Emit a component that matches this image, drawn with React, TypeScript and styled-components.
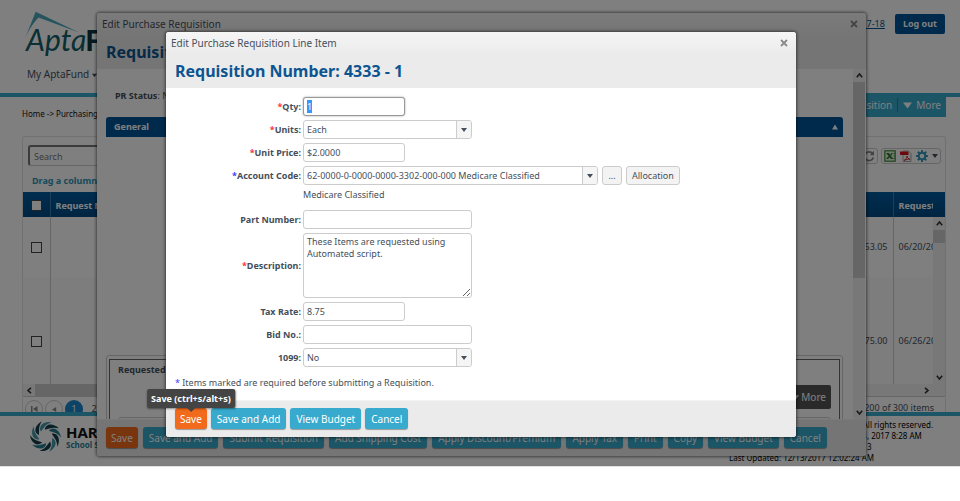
import React, { useEffect, useRef } from 'react';
import styled, { createGlobalStyle } from 'styled-components';

const teal = '#38aacd';
const navy = '#005596';
const ink = '#454f5b';

const Global = createGlobalStyle`
  * { box-sizing: border-box; }
  body { margin: 0; background: #fff; }
  body, button, input, select, textarea {
    font-family: "Noto Sans", "Open Sans", sans-serif;
    font-size: 9px;
    line-height: 12px;
    color: ${ink};
  }
  button { cursor: pointer; }
`;

/* ---------- application page ---------- */

const Shell = styled.div`
  position: relative;
  overflow: hidden;
  border-bottom: 1px solid #e2e2e2;
`;

const Masthead = styled.header`
  display: flex;
  justify-content: space-between;
  align-items: flex-start;
  height: 93px;
  padding: 11px 15px 0 24px;
`;

const Brand = styled.div`
  display: flex;
  flex-direction: column;
`;

const BrandLogo = styled.svg`
  width: 150px;
  height: 50px;
`;

const Menu = styled.nav`
  display: flex;
  gap: 16px;
  padding: 6px 3px;
`;

const MenuLink = styled.a`
  font-size: 10px;
  line-height: 14px;
  color: ${ink};
  text-decoration: none;
`;

const Account = styled.div`
  display: flex;
  align-items: center;
  gap: 10px;
  padding-top: 3px;
`;

const YearLink = styled.a`
  color: ${navy};
`;

const LogoutButton = styled.button`
  height: 20px;
  padding: 0 8px;
  border: 0;
  border-radius: 2px;
  background: ${navy};
  color: #fff;
  font-weight: bold;
`;

const SubBar = styled.div`
  display: flex;
  justify-content: space-between;
  align-items: flex-start;
  height: 43px;
  padding: 0 14px 0 22px;
  border-top: 4px solid ${teal};
`;

const Breadcrumb = styled.div`
  padding-top: 11px;
  font-size: 8px;
  color: #111;
`;

const ActionTabs = styled.div`
  display: flex;
  background: ${teal};
  padding: 1px 0 5px;
`;

const ActionTab = styled.button`
  display: flex;
  align-items: center;
  gap: 4px;
  height: 14px;
  padding: 0 5px;
  border: 0;
  background: none;
  color: #fff;
  font-size: 10px;
  & + & { border-left: 1px solid #2a7f9c; }
`;

const GridPanel = styled.section`
  margin: 0 14px 0 22px;
  border: 1px solid #e2e2e2;
  border-bottom: 0;
  border-radius: 3px 3px 0 0;
`;

const GridTools = styled.div`
  display: flex;
  justify-content: space-between;
  align-items: center;
  padding: 8px 4px 0 5px;
`;

const SearchInput = styled.input`
  width: 180px;
  height: 21px;
  padding: 0 4px;
  border: 1px solid #ccc;
  border-top: 2px solid #777;
  border-left: 2px solid #777;
  border-radius: 3px;
  &::placeholder { color: #777; opacity: 1; }
`;

const ToolGroups = styled.div`
  display: flex;
  gap: 3px;
`;

const ToolGroup = styled.div`
  display: flex;
  align-items: center;
  gap: 4px;
  height: 16px;
  padding: 0 2px;
  border: 1px solid #ccc;
  border-radius: 3px;
`;

const ToolButton = styled.button`
  display: flex;
  padding: 0;
  border: 0;
  background: none;
`;

const GroupHint = styled.div`
  padding: 9px 9px 5px;
  color: #2e95b5;
  font-weight: bold;
`;

const GridViewport = styled.div`
  display: flex;
  height: 192px;
  overflow: hidden;
  background: linear-gradient(#005b9e, #004a84) top / 100% 25px no-repeat;
`;

const RequestTable = styled.table`
  flex: 1;
  width: 100%;
  height: 213px;
  table-layout: fixed;
  border-collapse: collapse;
`;

const HeadCell = styled.th<{ $w?: number }>`
  width: ${p => (p.$w ? p.$w + 'px' : 'auto')};
  height: 25px;
  padding: 2px 5px 0;
  overflow: hidden;
  border-right: 1px solid #3c7cae;
  color: #fff;
  text-align: left;
  white-space: nowrap;
  &:last-child { border-right: 0; padding-right: 0; }
`;

const Cell = styled.td<{ $h: number; $right?: boolean; $alt?: boolean }>`
  height: ${p => p.$h}px;
  padding: 0 5px;
  overflow: hidden;
  background: ${p => (p.$alt ? '#fafafa' : '#fff')};
  border-right: 1px solid #ccc;
  text-align: ${p => (p.$right ? 'right' : 'left')};
  white-space: nowrap;
  &:last-child { border-right: 0; padding-right: 0; }
`;

const Check = styled.input`
  appearance: none;
  display: block;
  width: 11px;
  height: 11px;
  margin: 0 auto;
  border: 1px solid #444;
  background: #fff;
`;

const ScrollTrack = styled.div<{ $top?: number }>`
  display: flex;
  flex: none;
  flex-direction: column;
  width: 12px;
  margin-top: ${p => p.$top || 0}px;
  background: #f0f0f0;
`;

const ScrollThumb = styled.div<{ $h: number }>`
  height: ${p => p.$h}px;
  background: #cdcdcd;
`;

const ScrollArrow = styled.button<{ $end?: boolean }>`
  display: flex;
  align-items: center;
  justify-content: center;
  width: 12px;
  height: 13px;
  padding: 0;
  border: 0;
  background: none;
  margin-top: ${p => (p.$end ? 'auto' : '0')};
`;

const HorizontalScroll = styled.div`
  display: flex;
  height: 12px;
  background: #f0f0f0;
  padding-right: 13px;
`;

const HorizontalThumb = styled.div`
  flex: 1;
  margin-right: 100px;
  background: #cdcdcd;
`;

const Pager = styled.div`
  display: flex;
  justify-content: space-between;
  height: 16px;
  padding: 3px 11px 0 2px;
  overflow: hidden;
  border-top: 1px solid #ccc;
`;

const PageList = styled.div`
  display: flex;
  gap: 2px;
`;

const PageButton = styled.button<{ $kind?: 'round' | 'current' }>`
  display: flex;
  align-items: center;
  justify-content: center;
  flex: none;
  width: 18px;
  height: 18px;
  padding: 0;
  border-radius: 50%;
  border: ${p => (p.$kind === 'round' ? '1px solid #ccc' : '0')};
  background: ${p => (p.$kind === 'current' ? '#1a87cd' : 'none')};
  color: ${p => (p.$kind === 'current' ? '#fff' : ink)};
`;

const PageCount = styled.span`
  padding-top: 2px;
`;

const Footer = styled.footer`
  display: flex;
  justify-content: space-between;
  height: 54px;
  padding: 2px 31px 0 30px;
  border-top: 4px solid ${teal};
`;

const Company = styled.div`
  display: flex;
  align-items: center;
  gap: 5px;
  height: 37px;
`;

const CompanyName = styled.div`
  display: flex;
  flex-direction: column;
  color: #111;
  font-size: 15px;
  font-weight: bold;
  line-height: 15px;
`;

const CompanyUnit = styled.span`
  color: #2b8094;
  font-size: 8px;
  line-height: 9px;
`;

const Legal = styled.div`
  width: 200px;
  padding-top: 1px;
  color: #000;
  font-size: 8px;
  line-height: 11px;
  white-space: nowrap;
`;

/* ---------- dialogs ---------- */

const Layer = styled.div<{ $front?: boolean }>`
  position: absolute;
  inset: 0;
  padding: ${p => (p.$front ? '32px 164px 0 166px' : '13px 94px 0 97px')};
  background: ${p => (p.$front ? 'rgba(0, 0, 0, 0.5)' : 'transparent')};
`;

const Dialog = styled.div`
  border-radius: 3px;
  background: #fff;
  box-shadow: 0 0 3px 1px rgba(0, 0, 0, 0.5);
`;

const DialogHead = styled.div`
  height: 56px;
  padding: 4px 8px 0 5px;
  border-radius: 3px 3px 0 0;
  background: linear-gradient(#f6f6f6, #ebebeb 22px);
`;

const TitleRow = styled.div`
  display: flex;
  justify-content: space-between;
  align-items: center;
  font-size: 10px;
  line-height: 14px;
`;

const CloseButton = styled.button`
  display: flex;
  padding: 0;
  border: 0;
  background: none;
`;

const Heading = styled.h1`
  margin: 9px 0 0 4px;
  color: #0d5591;
  font-size: 16px;
  line-height: 24px;
`;

const DialogFoot = styled.div<{ $wide?: boolean }>`
  display: flex;
  gap: ${p => (p.$wide ? 5 : 4)}px;
  height: 37px;
  padding: 7px 9px;
  border-top: 1px solid #f3f3f3;
  border-radius: 0 0 3px 3px;
  background: #ebebeb;
`;

const ActionButton = styled.button<{ $primary?: boolean }>`
  height: 21px;
  padding: 0 ${p => (p.$primary ? 5 : 6)}px;
  border: 0;
  border-radius: 3px;
  background: ${p => (p.$primary ? '#f26a1b' : teal)};
  box-shadow: 0 1px 1px rgba(0, 0, 0, 0.35);
  color: #fff;
  font-size: 10px;
  white-space: nowrap;
`;

const DetailBody = styled.div`
  display: flex;
  height: 350px;
  padding-right: 1px;
  overflow: hidden;
`;

const DetailContent = styled.div`
  flex: 1;
  padding: 21px 10px 0 9px;
`;

const StatusLine = styled.div`
  height: 27px;
  padding: 0 9px;
`;

const SectionHead = styled.div`
  display: flex;
  justify-content: space-between;
  align-items: center;
  height: 20px;
  padding: 0 5px 0 8px;
  border-radius: 3px 3px 0 0;
  background: ${navy};
  color: #fff;
  font-weight: bold;
`;

const SectionBody = styled.div`
  min-height: 218px;
`;

const ItemsFrame = styled.div`
  padding: 3px 2px 0;
  border: 1px solid #ccc;
  border-radius: 3px;
`;

const ItemsInner = styled.div`
  height: 80px;
  padding: 4px 8px;
  border: 1px solid #666;
`;

const ItemsToolbar = styled.div`
  display: flex;
  justify-content: flex-end;
  padding: 9px 0 8px;
`;

const MoreButton = styled.button`
  height: 24px;
  padding: 0 5px;
  border: 0;
  border-radius: 2px;
  background: #555;
  color: #fff;
  font-size: 10px;
`;

const ItemsGrid = styled.div`
  height: 30px;
  border: 1px solid #ccc;
  border-radius: 3px;
`;

const Form = styled.form`
  display: flex;
  flex-direction: column;
  gap: 4px;
  padding: 9px 9px 11px;
`;

const Field = styled.div`
  display: grid;
  grid-template-columns: 126px 1fr;
  column-gap: 2px;
  align-items: center;
  min-height: 19px;
`;

const FieldHint = styled.div`
  height: 17px;
  padding-left: 128px;
`;

const Label = styled.label`
  font-weight: bold;
  text-align: right;
`;

const Mark = styled.span<{ $blue?: boolean }>`
  color: ${p => (p.$blue ? '#3c3cff' : '#f33')};
`;

const FieldValue = styled.div`
  display: flex;
  gap: 4px;
`;

const TextInput = styled.input<{ $wide?: boolean; $active?: boolean }>`
  width: ${p => (p.$wide ? 169 : 102)}px;
  height: 19px;
  padding: 0 3px;
  border: 1px solid ${p => (p.$active ? '#999' : '#ccc')};
  border-radius: 3px;
  outline: 0;
  box-shadow: ${p => (p.$active ? '0 0 2px #999' : 'none')};
  &::selection { background: #3399ff; color: #fff; }
`;

const TextArea = styled.textarea`
  display: block;
  width: 169px;
  height: 65px;
  padding: 2px 3px;
  border: 1px solid #ccc;
  border-radius: 3px;
`;

const SelectBox = styled.div<{ $wide?: boolean }>`
  display: grid;
  grid-template-columns: 1fr 15px;
  width: ${p => (p.$wide ? 295 : 169)}px;
  height: 19px;
  overflow: hidden;
  border: 1px solid #ccc;
  border-radius: 3px;
`;

const Select = styled.select`
  grid-area: 1 / 1 / 2 / 3;
  appearance: none;
  min-width: 0;
  padding: 0 3px;
  border: 0;
  background: none;
`;

const SelectArrow = styled.span`
  grid-area: 1 / 2 / 2 / 3;
  display: flex;
  align-items: center;
  justify-content: center;
  border-left: 1px solid #ccc;
  background: #f5f5f5;
  pointer-events: none;
`;

const PlainButton = styled.button`
  height: 19px;
  min-width: 20px;
  padding: 0 5px;
  border: 1px solid #ccc;
  border-radius: 3px;
  background: #f3f3f3;
`;

const Note = styled.p`
  margin: 6px 0 0;
`;

const TipAnchor = styled.div`
  position: relative;
  display: flex;
`;

const Tooltip = styled.div`
  position: absolute;
  bottom: 100%;
  left: 50%;
  transform: translateX(-50%);
  padding: 4px 4px 3px;
  border-radius: 2px;
  background: #444;
  box-shadow: 0 1px 2px rgba(0, 0, 0, 0.4);
  color: #fff;
  font-weight: bold;
  white-space: nowrap;
  &::after {
    content: '';
    position: absolute;
    top: 100%;
    left: 50%;
    margin-left: -4px;
    border: 4px solid transparent;
    border-top-color: #444;
    border-bottom-width: 0;
  }
`;

/* ---------- drawings ---------- */

const Triangle = ({ up, left, size = 6, color = ink }: { up?: boolean; left?: boolean; size?: number; color?: string }) => (
  <svg width={size} height={size} viewBox="0 0 6 6" aria-hidden="true">
    <path d={left ? 'M5 0v6L0 3z' : up ? 'M0 5.5h6L3 .5z' : 'M0 1h6L3 5z'} fill={color} />
  </svg>
);

const Chevron = ({ d }: { d: string }) => (
  <svg width="7" height="7" viewBox="0 0 7 7" aria-hidden="true">
    <path d={d} fill="none" stroke="#333" strokeWidth="1.6" />
  </svg>
);

const Cross = () => (
  <svg width="8" height="8" viewBox="0 0 8 8" aria-hidden="true">
    <path d="M1 1l6 6M7 1L1 7" stroke="#8a8a8a" strokeWidth="1.8" />
  </svg>
);

const Refresh = () => (
  <svg width="12" height="12" viewBox="0 0 12 12" aria-hidden="true">
    <path d="M9.6 3.6A4.4 4.4 0 1 0 10.3 7.4" fill="none" stroke="#888" strokeWidth="1.8" />
    <path d="M11 .8v4.4H6.8z" fill="#888" />
  </svg>
);

const Excel = () => (
  <svg width="12" height="12" viewBox="0 0 12 12" aria-hidden="true">
    <rect x=".8" y=".8" width="10.4" height="10.4" fill="#e4f2df" stroke="#3c8a3c" strokeWidth="1.2" />
    <path d="M2 3h3l1.3 1.8L7.6 3H9L7 6l2.4 3H7L5.6 7.2 4.2 9H2l2.6-3z" fill="#2c7d2c" />
    <path d="M9.5 3.5h1.5M9.5 6h1.5M9.5 8.5h1.5" stroke="#2c7d2c" strokeWidth=".8" />
  </svg>
);

const Pdf = () => (
  <svg width="12" height="12" viewBox="0 0 12 12" aria-hidden="true">
    <path d="M3 1h5.5L11 3.5V11.5H3z" fill="#f6f6f6" stroke="#999" strokeWidth=".8" />
    <rect x="0" y="1.5" width="8.5" height="3.5" fill="#d4141c" />
    <path d="M4 10.5c2-1 3-3 3-4.500 0 1.500 1.500 3 3 3.300-2-.3-4 .2-6 1.200z" fill="none" stroke="#d4141c" strokeWidth=".8" />
  </svg>
);

const Gear = () => (
  <svg width="12" height="12" viewBox="-6 -6 12 12" aria-hidden="true">
    {[0, 45, 90, 135].map(a => (
      <rect key={a} x="-1" y="-6" width="2" height="12" rx=".4" fill="#2e95b5" transform={`rotate(${a})`} />
    ))}
    <circle r="3.2" fill="#fff" stroke="#2e95b5" strokeWidth="1.8" />
  </svg>
);

const Swirl = () => (
  <svg width="31" height="31" viewBox="-15.5 -15.5 31 31" aria-hidden="true">
    {Array.from({ length: 10 }, (_, i) => (
      <path
        key={i}
        d="M-4.500 -5C-7.500 -10 -3 -15.500 6 -14.500C2.500 -13 .5 -11.500 -1 -9.500C-2.200 -8 -3.500 -6.500 -4.500 -5z"
        fill={i % 2 ? '#16414d' : i % 4 ? '#2b7f91' : '#459aa8'}
        transform={`rotate(${i * 36})`}
      />
    ))}
  </svg>
);

const columns: [string, number?][] = [
  ['Request Number', 140], ['Vendor'], ['Description'], ['Estimate', 90], ['Requested', 40],
];
const rows = [
  { h: 60, amount: '1,153.05', date: '06/20/2017', alt: false },
  { h: 128, amount: '375.00', date: '06/26/2017', alt: true },
];
const requisitionActions = [
  'Save and Add', 'Submit Requisition', 'Add Shipping Cost', 'Apply Discount/Premium',
  'Apply Tax', 'Print', 'Copy', 'View Budget', 'Cancel',
];

const UP = 'M.8 5.2L3.5 2l2.7 3.2';
const DOWN = 'M.8 1.8L3.5 5l2.7-3.2';
const LEFT = 'M5 .8L2 3.5l3 2.7';
const RIGHT = 'M2 .8l3 2.7-3 2.7';

function RequestsPage() {
  return (
    <>
      <Masthead>
        <Brand>
          <BrandLogo viewBox="0 0 150 50" role="img" aria-label="AptaFund">
            <path d="M1 27.500L11.700.7 55 21.500 14.500 6.500C9 12 4.500 19 1 27.500z" fill="#4ba9bd" />
            <text x="2" y="40" fontFamily="Lato, sans-serif" fontStyle="italic" fontSize="30" fill="#14606b">Apta</text>
            <text x="61" y="40" fontFamily="Noto Sans, sans-serif" fontWeight="700" fontSize="28" fill="#0c3440">Fund</text>
          </BrandLogo>
          <Menu>
            <MenuLink href="#my">My AptaFund <Triangle size={5} /></MenuLink>
          </Menu>
        </Brand>
        <Account>
          <YearLink href="#year">2017-18</YearLink>
          <LogoutButton>Log out</LogoutButton>
        </Account>
      </Masthead>
      <SubBar>
        <Breadcrumb>Home -&gt; Purchasing</Breadcrumb>
        <ActionTabs>
          <ActionTab>Add Requisition</ActionTab>
          <ActionTab><Triangle size={9} color="#fff" />More</ActionTab>
        </ActionTabs>
      </SubBar>
      <GridPanel>
        <GridTools>
          <SearchInput placeholder="Search" aria-label="Search" />
          <ToolGroups>
            <ToolGroup>
              <ToolButton aria-label="Refresh"><Refresh /></ToolButton>
            </ToolGroup>
            <ToolGroup>
              <ToolButton aria-label="Export to Excel"><Excel /></ToolButton>
              <ToolButton aria-label="Export to PDF"><Pdf /></ToolButton>
              <ToolButton aria-label="Settings"><Gear /></ToolButton>
              <ToolButton aria-label="More settings"><Triangle /></ToolButton>
            </ToolGroup>
          </ToolGroups>
        </GridTools>
        <GroupHint>Drag a column</GroupHint>
        <GridViewport>
          <RequestTable>
            <thead>
              <tr>
                <HeadCell $w={27}><Check type="checkbox" aria-label="Select all" /></HeadCell>
                {columns.map(([name, w]) => <HeadCell key={name} $w={w}>{name}</HeadCell>)}
              </tr>
            </thead>
            <tbody>
              {rows.map(r => (
                <tr key={r.date}>
                  <Cell $h={r.h} $alt={r.alt}><Check type="checkbox" aria-label={`Select ${r.date}`} /></Cell>
                  <Cell $h={r.h} $alt={r.alt} />
                  <Cell $h={r.h} $alt={r.alt} />
                  <Cell $h={r.h} $alt={r.alt} />
                  <Cell $h={r.h} $alt={r.alt} $right>{r.amount}</Cell>
                  <Cell $h={r.h} $alt={r.alt}>{r.date}</Cell>
                </tr>
              ))}
            </tbody>
          </RequestTable>
          <ScrollTrack $top={25}>
            <ScrollArrow aria-label="Scroll up"><Chevron d={UP} /></ScrollArrow>
            <ScrollThumb $h={13} />
            <ScrollArrow $end aria-label="Scroll down"><Chevron d={DOWN} /></ScrollArrow>
          </ScrollTrack>
        </GridViewport>
        <HorizontalScroll>
          <ScrollArrow aria-label="Scroll left"><Chevron d={LEFT} /></ScrollArrow>
          <HorizontalThumb />
          <ScrollArrow aria-label="Scroll right"><Chevron d={RIGHT} /></ScrollArrow>
        </HorizontalScroll>
        <Pager>
          <PageList>
            <PageButton $kind="round" aria-label="First page">
              <svg width="7" height="6" viewBox="0 0 7 6" aria-hidden="true"><path d="M0 0h1.500v6H0zM6.500 0v6L2 3z" fill="#888" /></svg>
            </PageButton>
            <PageButton $kind="round" aria-label="Previous page"><Triangle left size={5} color="#888" /></PageButton>
            <PageButton $kind="current">1</PageButton>
            <PageButton>2</PageButton>
          </PageList>
          <PageCount>1 - 200 of 300 items</PageCount>
        </Pager>
      </GridPanel>
      <Footer>
        <Company>
          <Swirl />
          <CompanyName>HARRIS<CompanyUnit>School Solutions</CompanyUnit></CompanyName>
        </Company>
        <Legal>
          <div>© 2017 Harris School Solutions Inc. All rights reserved.</div>
          <div>Server Time: Thursday, December 14, 2017 8:28 AM</div>
          <div>AptaFund Version Number: 3.15.2.113</div>
          <div>Last Updated: 12/13/2017 12:02:24 AM</div>
        </Legal>
      </Footer>
    </>
  );
}

function RequisitionDialog() {
  return (
    <Dialog role="dialog" aria-label="Edit Purchase Requisition">
      <DialogHead>
        <TitleRow>Edit Purchase Requisition<CloseButton aria-label="Close"><Cross /></CloseButton></TitleRow>
        <Heading>Requisition Number: 4333</Heading>
      </DialogHead>
      <DetailBody>
        <DetailContent>
          <StatusLine><b>PR Status</b>: New</StatusLine>
          <SectionHead>General<Triangle up color="#fff" /></SectionHead>
          <SectionBody />
          <ItemsFrame>
            <ItemsInner>
              <b>Requested Items</b>
              <ItemsToolbar><MoreButton><Triangle size={7} color="#fff" /> More</MoreButton></ItemsToolbar>
              <ItemsGrid />
            </ItemsInner>
          </ItemsFrame>
        </DetailContent>
        <ScrollTrack>
          <ScrollArrow aria-label="Scroll up"><Chevron d={UP} /></ScrollArrow>
          <ScrollThumb $h={196} />
          <ScrollArrow $end aria-label="Scroll down"><Chevron d={DOWN} /></ScrollArrow>
        </ScrollTrack>
      </DetailBody>
      <DialogFoot $wide>
        <ActionButton $primary>Save</ActionButton>
        {requisitionActions.map(a => <ActionButton key={a}>{a}</ActionButton>)}
      </DialogFoot>
    </Dialog>
  );
}

function LineItemDialog() {
  const qty = useRef<HTMLInputElement>(null);
  useEffect(() => {
    qty.current?.focus();
    qty.current?.select();
  }, []);
  return (
    <Dialog role="dialog" aria-label="Edit Purchase Requisition Line Item">
      <DialogHead>
        <TitleRow>Edit Purchase Requisition Line Item<CloseButton aria-label="Close"><Cross /></CloseButton></TitleRow>
        <Heading>Requisition Number: 4333 - 1</Heading>
      </DialogHead>
      <Form id="line-item" onSubmit={e => e.preventDefault()}>
        <Field>
          <Label htmlFor="qty"><Mark>*</Mark>Qty:</Label>
          <FieldValue><TextInput id="qty" ref={qty} $active defaultValue="1" /></FieldValue>
        </Field>
        <Field>
          <Label htmlFor="units"><Mark>*</Mark>Units:</Label>
          <SelectBox><Select id="units"><option>Each</option></Select><SelectArrow><Triangle /></SelectArrow></SelectBox>
        </Field>
        <Field>
          <Label htmlFor="price"><Mark>*</Mark>Unit Price:</Label>
          <FieldValue><TextInput id="price" defaultValue="$2.0000" /></FieldValue>
        </Field>
        <Field>
          <Label htmlFor="account"><Mark $blue>*</Mark>Account Code:</Label>
          <FieldValue>
            <SelectBox $wide>
              <Select id="account"><option>62-0000-0-0000-0000-3302-000-000 Medicare Classified</option></Select>
              <SelectArrow><Triangle /></SelectArrow>
            </SelectBox>
            <PlainButton type="button" aria-label="Browse account codes">...</PlainButton>
            <PlainButton type="button">Allocation</PlainButton>
          </FieldValue>
        </Field>
        <FieldHint>Medicare Classified</FieldHint>
        <Field>
          <Label htmlFor="part">Part Number:</Label>
          <FieldValue><TextInput id="part" $wide /></FieldValue>
        </Field>
        <Field>
          <Label htmlFor="description"><Mark>*</Mark>Description:</Label>
          <TextArea id="description" defaultValue="These Items are requested using Automated script." />
        </Field>
        <Field>
          <Label htmlFor="tax">Tax Rate:</Label>
          <FieldValue><TextInput id="tax" defaultValue="8.75" /></FieldValue>
        </Field>
        <Field>
          <Label htmlFor="bid">Bid No.:</Label>
          <FieldValue><TextInput id="bid" $wide /></FieldValue>
        </Field>
        <Field>
          <Label htmlFor="form1099">1099:</Label>
          <SelectBox><Select id="form1099"><option>No</option></Select><SelectArrow><Triangle /></SelectArrow></SelectBox>
        </Field>
        <Note><Mark $blue>*</Mark> Items marked are required before submitting a Requisition.</Note>
      </Form>
      <DialogFoot>
        <TipAnchor>
          <ActionButton $primary form="line-item">Save</ActionButton>
          <Tooltip role="tooltip">Save (ctrl+s/alt+s)</Tooltip>
        </TipAnchor>
        <ActionButton>Save and Add</ActionButton>
        <ActionButton>View Budget</ActionButton>
        <ActionButton>Cancel</ActionButton>
      </DialogFoot>
    </Dialog>
  );
}

export default function App() {
  return (
    <>
      <Global />
      <Shell>
        <RequestsPage />
        <Layer><RequisitionDialog /></Layer>
        <Layer $front><LineItemDialog /></Layer>
      </Shell>
    </>
  );
}
